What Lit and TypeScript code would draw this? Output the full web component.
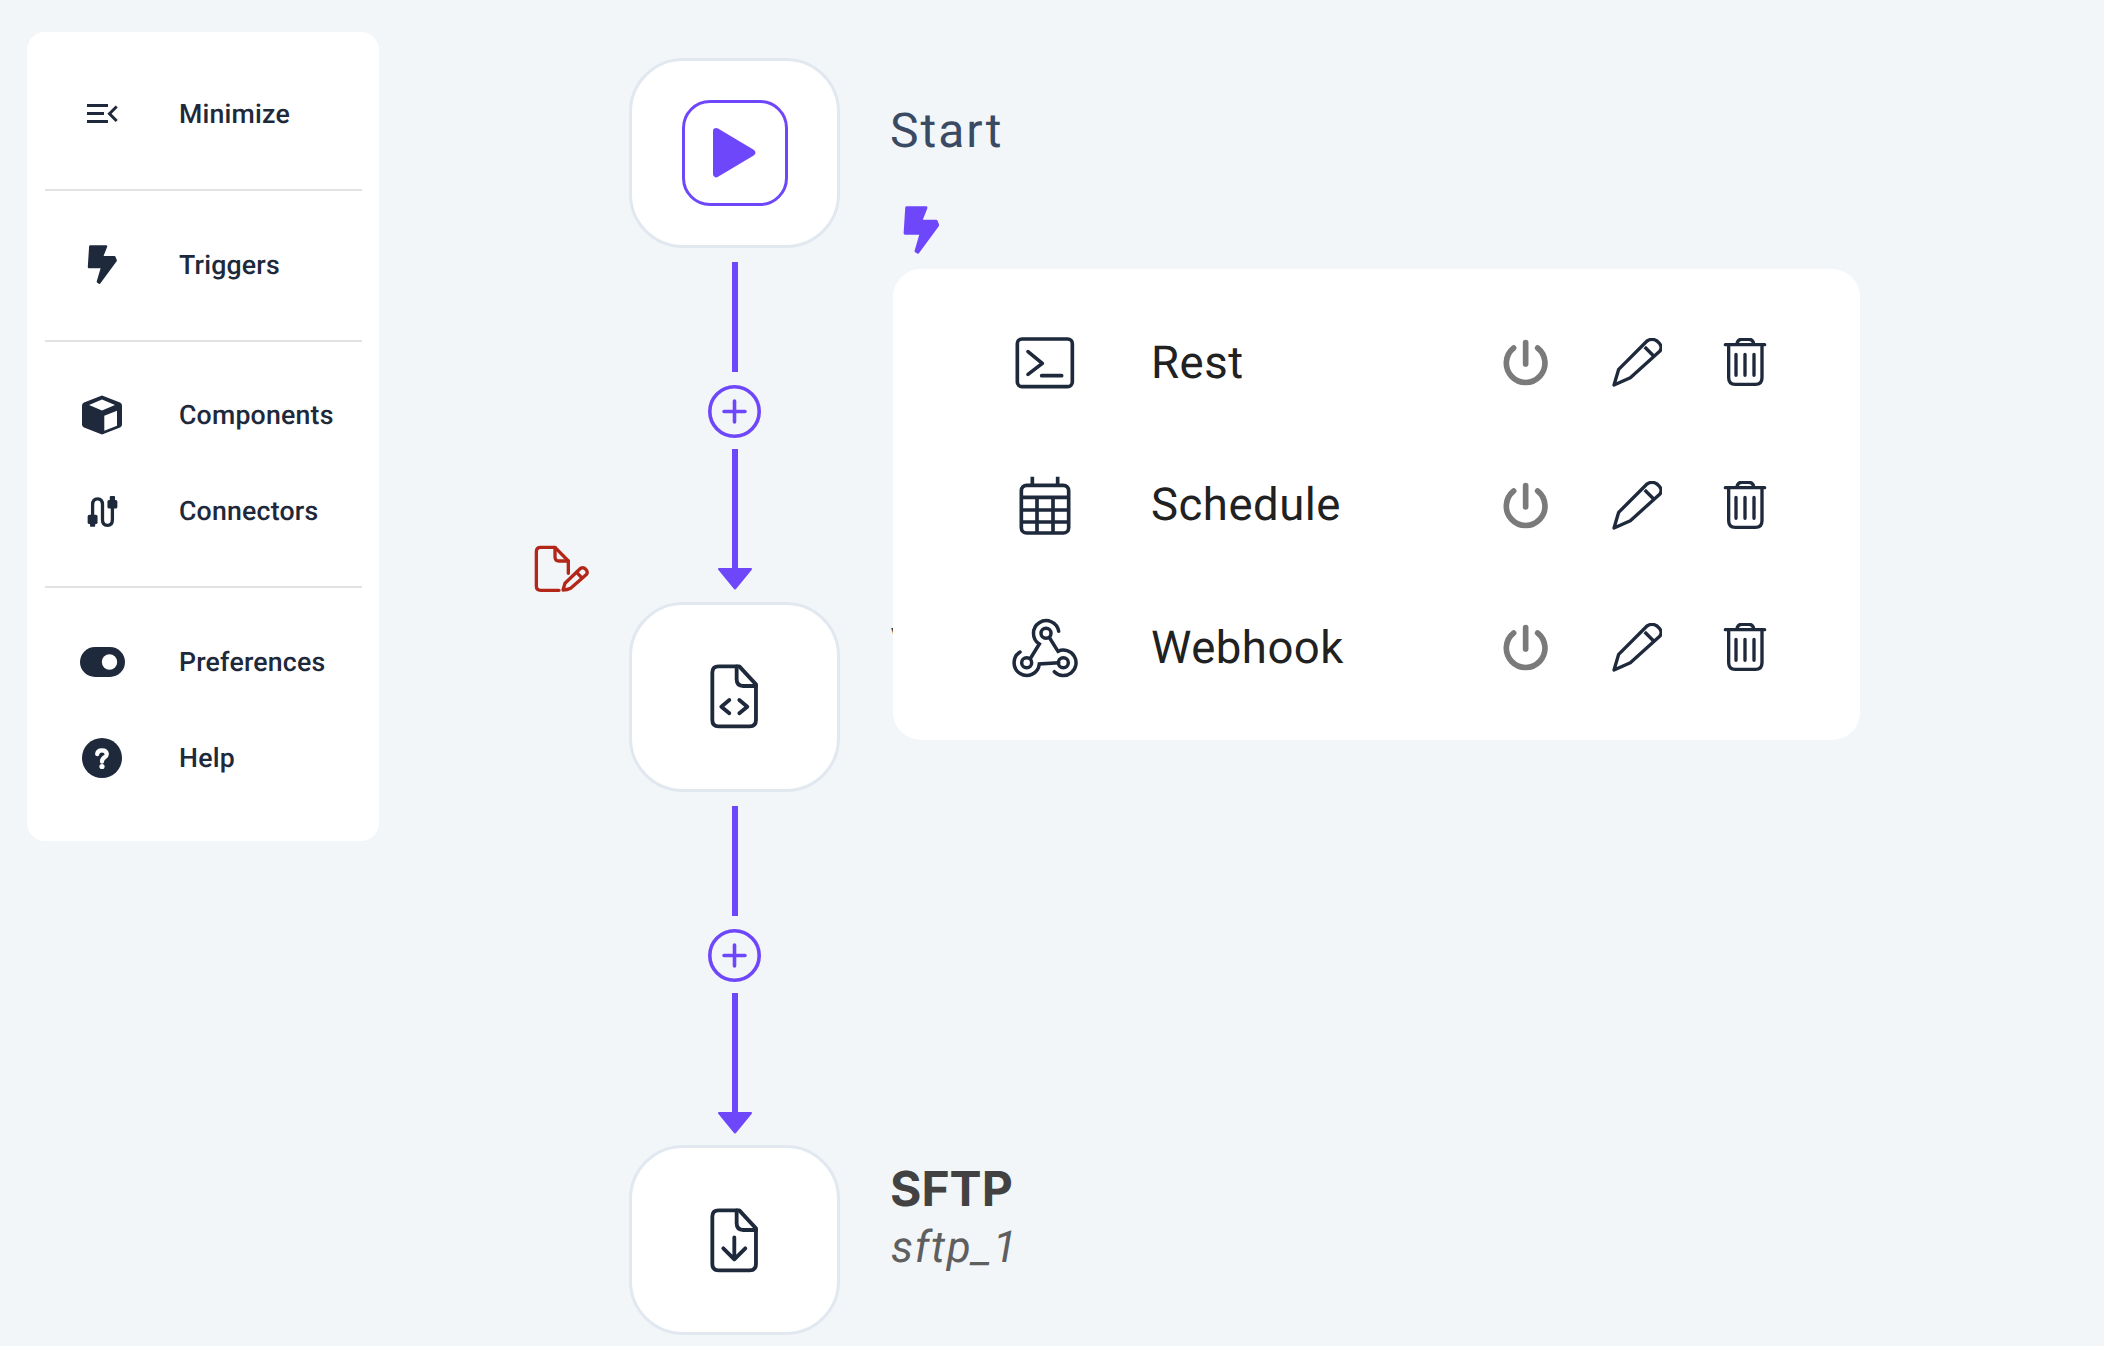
import { LitElement, html, css, svg } from 'lit'
import { customElement } from 'lit/decorators.js'

const bolt = svg`<path d="M270 679H318L305 712H343L347 722L298 789L293 786L306 742H266Z" fill="currentColor" stroke="currentColor" stroke-width="7" stroke-linejoin="round"/>`

const docOutline = svg`<path d="M607 730Q607 711 626 711H688L738 765V872Q738 891 719 891H626Q607 891 607 872Z"/><path d="M680 711V750Q680 770 700 770H738"/>`

const sideItems = [
  [
    {
      label: 'Minimize',
      icon: html`<svg width="31" height="20" viewBox="0 0 31 20" fill="none" stroke="currentColor" stroke-width="3"><path d="M0 1.5H21M0 9.5H17M0 17.5H21"/><path d="M29.7 2.5L22.5 9.7L29.7 17"/></svg>`,
    },
  ],
  [
    {
      label: 'Triggers',
      icon: html`<svg width="30" height="39" viewBox="261 675 89 118">${bolt}</svg>`,
    },
  ],
  [
    {
      label: 'Components',
      icon: html`<svg width="40" height="40" viewBox="0 0 40 40"><path d="M20 0.5L38 7.5Q40 8.5 40 10.5V29.5Q40 31.5 38 32.5L20 39.5L2 32.5Q0 31.5 0 29.5V10.5Q0 8.5 2 7.5Z" fill="currentColor"/><path d="M22.3 20.700L35 15.700V30.700L22.300 35.700Z" fill="#fff"/><path d="M20 4.500L33 10L20 15.500L7 10Z" fill="#fff"/></svg>`,
    },
    {
      label: 'Connectors',
      icon: html`<svg width="33" height="33" viewBox="40 30 100 100" fill="none" stroke="currentColor" stroke-width="10"><path d="M60 95V60Q60 42 75 42T90 60V105Q90 122 105 122T120 105V65"/><rect x="45" y="90" width="30" height="28" rx="5" fill="currentColor" stroke="none"/><rect x="52" y="112" width="16" height="14" rx="3" fill="currentColor" stroke="none"/><rect x="105" y="45" width="30" height="26" rx="5" fill="currentColor" stroke="none"/><rect x="112" y="33" width="16" height="14" rx="3" fill="currentColor" stroke="none"/></svg>`,
    },
  ],
  [
    {
      label: 'Preferences',
      icon: html`<svg width="45" height="30" viewBox="0 0 45 30"><rect width="45" height="30" rx="15" fill="currentColor"/><circle cx="29.500" cy="15" r="7.700" fill="#fff"/></svg>`,
    },
    {
      label: 'Help',
      icon: html`<svg width="40" height="40" viewBox="0 0 40 40"><circle cx="20" cy="20" r="20" fill="currentColor"/><path d="M15.200 16Q15.500 12.300 20 12.300T24.800 16C24.800 19.500 20 19 20 23.500" fill="none" stroke="#fff" stroke-width="4.300" stroke-linecap="round"/><circle cx="20" cy="28.500" r="2.600" fill="#fff"/></svg>`,
    },
  ],
]

const triggers = [
  {
    label: 'Rest',
    icon: html`<svg width="62" height="54" viewBox="100 78 186 162" fill="none" stroke="currentColor" stroke-width="11" stroke-linecap="round" stroke-linejoin="round"><rect x="110" y="87" width="165" height="143" rx="14"/><path d="M142 125L185 160L142 193M183 197H243"/></svg>`,
  },
  {
    label: 'Schedule',
    icon: html`<svg width="54" height="60.700" viewBox="115 495 162 182" fill="none" stroke="currentColor" stroke-width="11"><rect x="125" y="526" width="142" height="143" rx="16"/><path d="M158 500V524M234 500V524M125 562H267M125 600H267M125 636H267M172 562V669M220 562V669"/></svg>`,
  },
  {
    label: 'Webhook',
    icon: html`<svg width="66" height="63" viewBox="18 23 198 189" fill="none" stroke="currentColor" stroke-width="10.500" stroke-linecap="round"><circle cx="120" cy="72" r="15"/><circle cx="62" cy="160" r="15"/><circle cx="172" cy="160" r="15"/><path d="M158 66A38 38 0 1 0 100 104L74 146"/><path d="M42 128A38 38 0 1 0 100 164L158 160"/><path d="M131 86L156 126A38 38 0 1 1 145 187"/></svg>`,
  },
]

const actions = html`
  <svg class="act-power" width="47.300" height="49.300" viewBox="158 80 142 148" fill="none" stroke="currentColor" stroke-width="17" stroke-linecap="round"><path d="M229 94V158"/><path d="M193 110A58 58 0 1 0 265 110"/></svg>
  <svg class="act-pencil" width="50.700" height="50" viewBox="485 86 152 150" fill="none" stroke="currentColor" stroke-width="10" stroke-linejoin="round"><path d="M491 227L505 180L590 95Q605 85 620 95L628 103Q637 115 628 126L540 205Z"/><path d="M583 113L610 140"/></svg>
  <svg class="act-trash" width="44" height="50" viewBox="818 86 132 150" fill="none" stroke="currentColor" stroke-width="10" stroke-linecap="round" stroke-linejoin="round"><path d="M825 106H943M835 107V205Q835 225 855 225H915Q935 225 935 205V107"/><path d="M860 105V103Q862 90 875 90H895Q908 90 910 103V105M857 135V198M884 135V198M911 135V198"/></svg>
`

@customElement('app-root')
export class AppRoot extends LitElement {
  static styles = css`
    :host {
      display: block;
      height: 1346px;
      overflow: hidden;
      background: #f2f6f9;
      font-family: Roboto, "Liberation Sans", sans-serif;
      text-rendering: geometricPrecision;
    }

    .page {
      display: flex;
      align-items: flex-start;
      padding: 32px 0 0 27px;
    }

    .sidebar {
      flex: none;
      box-sizing: border-box;
      width: 352px;
      height: 809px;
      padding: 58px 17px 0 18px;
      background: #fff;
      border-radius: 18px;
      color: #1e293b;
    }

    .group {
      display: flex;
      flex-direction: column;
      gap: 48px;
      padding-bottom: 51px;
      margin-bottom: 49.500px;
      border-bottom: 2px solid #e2e2e2;
    }

    .group:last-child {
      border-bottom: none;
    }

    .item {
      display: flex;
      align-items: center;
      height: 48px;
      font-size: 26.700px;
      font-weight: 500;
      letter-spacing: 0.200px;
    }

    .item-icon {
      flex: none;
      display: flex;
      align-items: center;
      justify-content: center;
      width: 78px;
      margin: 0 38px 0 18px;
    }

    .canvas {
      position: relative;
      flex: none;
      margin-left: 250px;
      padding-top: 26px;
    }

    .step {
      display: flex;
      align-items: flex-start;
      gap: 50px;
    }

    .node {
      position: relative;
      flex: none;
      box-sizing: border-box;
      display: flex;
      align-items: center;
      justify-content: center;
      width: 211px;
      height: 190px;
      background: #fff;
      border: 3px solid #e2e8f0;
      border-radius: 54px;
      color: #1e293b;
    }

    .start-box {
      display: flex;
      align-items: center;
      justify-content: center;
      box-sizing: border-box;
      width: 106px;
      height: 106px;
      border: 3.500px solid #6f47fb;
      border-radius: 28px;
    }

    .label-plain {
      margin-top: 45px;
      font-size: 48px;
      line-height: 56px;
      letter-spacing: 2px;
      color: #3a4a63;
    }

    .label-name {
      margin-top: 14px;
      font-family: Inter, Roboto, sans-serif;
      font-size: 48px;
      font-weight: 700;
      line-height: 59px;
      color: #424242;
    }

    .label-id {
      margin-left: 1px;
      font-size: 44px;
      font-style: italic;
      line-height: 58px;
      letter-spacing: 1.600px;
      color: #5f5f5f;
    }

    .connector {
      display: flex;
      flex-direction: column;
      align-items: center;
      width: 211px;
      padding-top: 14px;
      height: 339px;
      box-sizing: border-box;
      margin-bottom: 14.500px;
    }

    .line {
      flex: none;
      width: 6px;
      background: #6f47fb;
    }

    .line.top {
      height: 110px;
      margin-bottom: 13px;
    }

    .line.bottom {
      height: 120px;
      margin-top: 11px;
    }

    .plus {
      flex: none;
      display: block;
    }

    .arrow {
      flex: none;
      display: block;
      margin-top: -2px;
    }

    .trigger-mark {
      position: absolute;
      left: 274px;
      top: 174px;
      color: #6f47fb;
    }

    .edit-mark {
      position: absolute;
      left: -98px;
      top: -60px;
      color: #b3261a;
    }

    .panel {
      position: absolute;
      left: 264px;
      top: 237px;
      box-sizing: border-box;
      width: 967px;
      height: 471px;
      padding: 46px 0 0 119px;
      background: #fff;
      border-radius: 28px;
      color: #1e293b;
    }

    .trigger {
      display: flex;
      align-items: center;
      height: 96px;
      margin-bottom: 46.500px;
    }

    .trigger-ic {
      flex: none;
      display: flex;
      align-items: center;
      justify-content: center;
      width: 66px;
    }

    .trigger-name {
      flex: none;
      width: 351.300px;
      margin-left: 73px;
      font-size: 45.500px;
      letter-spacing: 0.500px;
      color: #212121;
    }

    .act-power {
      flex: none;
      color: #7a7a7a;
    }

    .act-pencil {
      flex: none;
      margin-left: 62px;
    }

    .act-trash {
      flex: none;
      margin-left: 60.400px;
    }
  `

  connector() {
    return html`
      <div class="connector">
        <div class="line top"></div>
        <svg class="plus" width="53" height="53" viewBox="0 0 53 53" fill="none" stroke="#6f47fb" stroke-width="3.600" stroke-linecap="round"><circle cx="26.500" cy="26.500" r="24.700"/><path d="M26.500 16V37M16 26.500H37"/></svg>
        <div class="line bottom"></div>
        <svg class="arrow" width="36" height="24" viewBox="0 0 36 24"><path d="M2 2H34L18 21.500Z" fill="#6f47fb" stroke="#6f47fb" stroke-width="2" stroke-linejoin="round"/></svg>
      </div>
    `
  }

  render() {
    return html`
      <div class="page">
        <nav class="sidebar">
          ${sideItems.map(
            (group) => html`
              <div class="group">
                ${group.map(
                  (item) => html`
                    <div class="item">
                      <span class="item-icon">${item.icon}</span>
                      <span>${item.label}</span>
                    </div>
                  `,
                )}
              </div>
            `,
          )}
        </nav>

        <div class="canvas">
          <div class="step">
            <div class="node">
              <div class="start-box">
                <svg width="42.300" height="49.300" viewBox="611 266 127 148"><path d="M621 276L728 340L621 404Z" fill="#6f47fb" stroke="#6f47fb" stroke-width="20" stroke-linejoin="round"/></svg>
              </div>
            </div>
            <div class="label-plain">Start</div>
          </div>
          ${this.connector()}
          <div class="step">
            <div class="node">
              <svg class="edit-mark" width="55" height="48.300" viewBox="25 30 165 145" fill="none" stroke="currentColor" stroke-width="10" stroke-linecap="round" stroke-linejoin="round"><path d="M100 166H45Q32 166 32 153V50Q32 37 45 37H88L128 78V115"/><path d="M88 37V65Q88 78 100 78H128"/><path d="M112 165L118 145L165 100Q175 95 182 105T178 122L135 160Q125 165 112 165Z"/><path d="M153 112L168 128"/></svg>
              <svg width="50.300" height="66.700" viewBox="597 701 151 200" fill="none" stroke="currentColor" stroke-width="11.500" stroke-linecap="round" stroke-linejoin="round">${docOutline}<path d="M658 812L634 832L658 852M688 812L712 832L688 852"/></svg>
            </div>
            <div class="label-name">Validate</div>
          </div>
          ${this.connector()}
          <div class="step">
            <div class="node">
              <svg width="50.300" height="66.700" viewBox="597 701 151 200" fill="none" stroke="currentColor" stroke-width="11.500" stroke-linecap="round" stroke-linejoin="round">${docOutline}<path d="M673 792V855M640 825L673 858L706 825"/></svg>
            </div>
            <div>
              <div class="label-name">SFTP</div>
              <div class="label-id">sftp_1</div>
            </div>
          </div>

          <svg class="trigger-mark" width="36" height="48" viewBox="261 675 89 118">${bolt}</svg>

          <div class="panel">
            ${triggers.map(
              (row) => html`
                <div class="trigger">
                  <div class="trigger-ic">${row.icon}</div>
                  <div class="trigger-name">${row.label}</div>
                  ${actions}
                </div>
              `,
            )}
          </div>
        </div>
      </div>
    `
  }
}
